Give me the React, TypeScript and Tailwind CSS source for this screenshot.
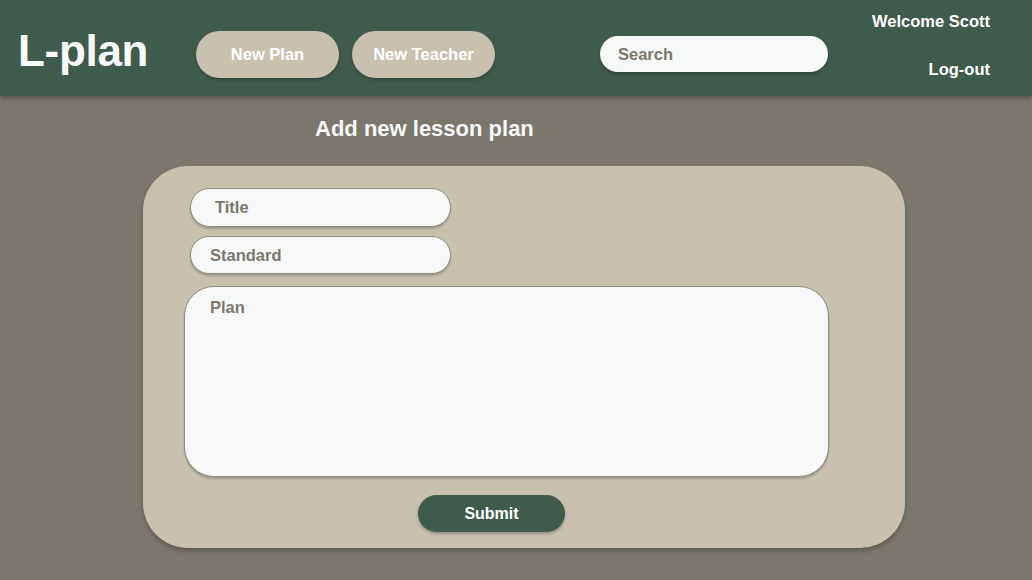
import React from 'react';

const font = { fontFamily: '"Liberation Sans", Arial, sans-serif' };

const App = () => {
  return (
    <div className="w-[1032px] h-[580px] bg-[#7c776d] overflow-hidden" style={font}>
      <header className="relative z-10 flex h-24 items-center bg-[#3f5b4c] shadow-[0_3px_4px_rgba(0,0,0,0.25)]">
        <div className="w-[196px] pl-[18px] mt-[6px]">
          <span className="text-[44px] font-bold leading-none text-[#f7f9f9] tracking-[-0.3px]">L-plan</span>
        </div>
        <div className="mt-[13px] flex gap-[13px]">
          <button className="h-[47px] w-[143px] rounded-full bg-[#c9c0ae] text-[16.5px] font-bold text-white shadow-[0_2px_3px_rgba(0,0,0,0.25)]">
            New Plan
          </button>
          <button className="h-[47px] w-[143px] rounded-full bg-[#c9c0ae] text-[16.5px] font-bold text-white shadow-[0_2px_3px_rgba(0,0,0,0.25)]">
            New Teacher
          </button>
        </div>
        <div className="ml-[105px] mt-[12px] flex h-9 w-[228px] items-center rounded-full bg-[#f7f9f9] pl-[18px] shadow-[0_2px_3px_rgba(0,0,0,0.25)]">
          <span className="text-[16.5px] font-bold text-[#7c776d]">Search</span>
        </div>
        <div className="ml-auto mr-[42px] flex h-full flex-col items-end pt-[11px]">
          <span className="text-[16.5px] font-bold leading-5 text-white">Welcome Scott</span>
          <span className="mt-[28px] text-[16.5px] font-bold leading-5 text-white">Log-out</span>
        </div>
      </header>

      <h1 className="ml-[315px] mt-[19px] text-[22px] font-bold leading-7 text-[#f7f9f9]">Add new lesson plan</h1>

      <div className="ml-[143px] mt-[23px] h-[382px] w-[762px] rounded-[45px] bg-[#c9c0ae] pt-[22px] shadow-[0_3px_4px_rgba(0,0,0,0.25)]">
        <div className="ml-[47px] flex h-[39px] w-[261px] items-center rounded-full border border-[#8f8a80] bg-[#f7f9f9] pl-[24px] shadow-[0_2px_2px_rgba(0,0,0,0.2)]">
          <span className="text-[16.5px] font-bold text-[#7c776d]">Title</span>
        </div>
        <div className="ml-[47px] mt-[9px] flex h-[38px] w-[261px] items-center rounded-full border border-[#8f8a80] bg-[#f7f9f9] pl-[19px] shadow-[0_2px_2px_rgba(0,0,0,0.2)]">
          <span className="text-[16.5px] font-bold text-[#7c776d]">Standard</span>
        </div>
        <div className="ml-[41px] mt-[12px] h-[191px] w-[645px] rounded-[30px] border border-[#8f8a80] bg-[#f7f9f9] pl-[25px] pt-[8px] shadow-[0_2px_2px_rgba(0,0,0,0.2)]">
          <span className="text-[16.5px] font-bold text-[#7c776d]">Plan</span>
        </div>
        <button className="ml-[275px] mt-[18px] h-[37px] w-[147px] rounded-full bg-[#3f5b4c] text-[16px] font-bold text-white shadow-[0_2px_3px_rgba(0,0,0,0.25)]">
          Submit
        </button>
      </div>
    </div>
  );
};

export default App;
